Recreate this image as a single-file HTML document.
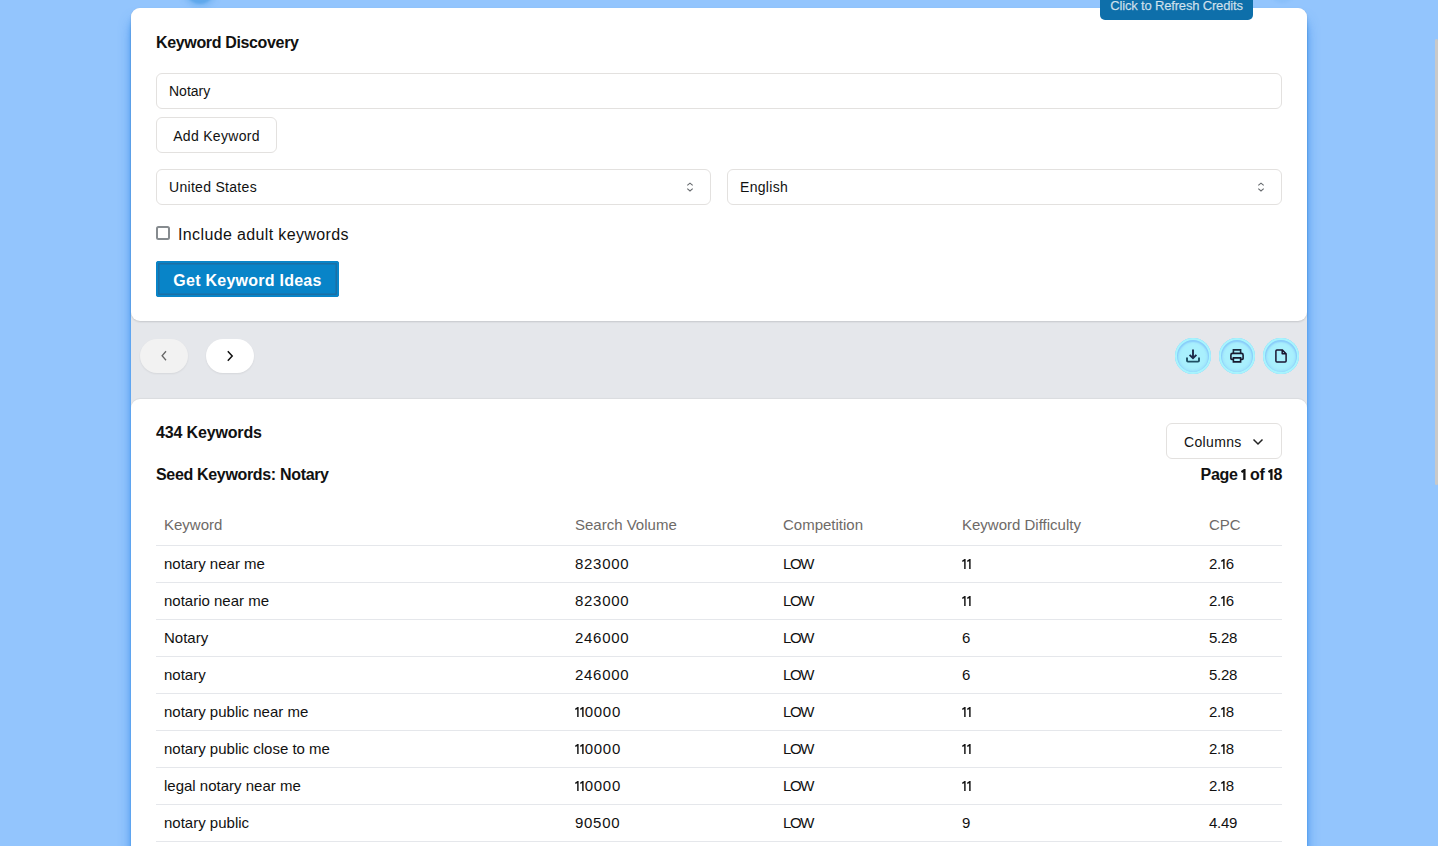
<!DOCTYPE html>
<html><head><meta charset="utf-8">
<style>
*{box-sizing:border-box;margin:0;padding:0}
html,body{width:1438px;height:846px;overflow:hidden}
body{background:#93c5fd;font-family:"Liberation Sans",sans-serif;color:#111;position:relative}
.abs{position:absolute}
.scroll{position:absolute;left:1435px;top:39px;width:3px;height:446px;background:#c9c9c9;border-radius:2px}
.blob{position:absolute;left:184px;top:-31px;width:32px;height:35px;border-radius:50%;background:#60a8ec;box-shadow:0 1px 4px 3px rgba(110,175,240,.5);filter:blur(1.2px)}
.blob2{position:absolute;left:1268px;top:-24px;width:28px;height:27px;border-radius:50%;background:rgba(100,170,240,.18);filter:blur(1px)}
.wrap{position:absolute;left:131px;top:8px;width:1176px;height:900px;background:#e5e7eb;border-radius:9px 9px 0 0;box-shadow:0 12px 14px -2px rgba(30,120,225,.75), 0 8px 5px -1px rgba(40,140,230,.55), 0 14px 3px -1px rgba(50,150,235,.6)}
.card1{position:absolute;left:131px;top:8px;width:1176px;height:313px;background:#fff;border-radius:9px;box-shadow:0 1px 2px rgba(0,0,0,.14)}
.card2{position:absolute;left:131px;top:399px;width:1176px;height:500px;background:#fff;border-radius:9px 9px 0 0;box-shadow:0 -1px 1px rgba(0,0,0,.05)}
.credits{position:absolute;left:1100px;top:-10px;width:153px;height:29.5px;background:#0e6faa;color:rgba(255,255,255,.75);font-size:13px;letter-spacing:-0.17px;-webkit-text-stroke:0.25px rgba(255,255,255,.6);border-radius:0 0 5px 5px;text-align:center;line-height:32px}
.h{position:absolute;font-weight:bold;font-size:16px;color:#111}
.input{position:absolute;border:1px solid #e3e1df;border-radius:6px;background:#fff;font-size:14px;color:#111}
.btn-outline{position:absolute;border:1px solid #e3e1df;border-radius:6px;background:#fff;font-size:14px;color:#111;text-align:center}
.primary{position:absolute;left:156px;top:261px;width:183px;height:36px;background:#0884c8;border-radius:3px;box-shadow:inset 0 0 0 2px #0884c8, inset 0 0 0 3.5px rgba(45,95,135,.55);color:#fff;font-weight:bold;font-size:16px;text-align:center;line-height:39px;letter-spacing:0.25px}
.cb{position:absolute;left:156px;top:226px;width:14px;height:14px;border:2px solid #868b8f;border-radius:2.5px;background:#fff}
.band-btn{position:absolute;top:339px;width:48px;height:34px;border-radius:17px;box-shadow:0 1px 2px rgba(0,0,0,.07)}
.circ{position:absolute;top:338px;width:36px;height:36px;border-radius:50%;background:#a9f0fd;box-shadow:inset 0 0 0 2px #a8f4fd, inset 0 1px 1.5px 3px rgba(115,180,248,.55), inset 0 0 3px 4px rgba(150,215,252,.4)}
.circ svg{position:absolute;left:0;top:0}
table{position:absolute;left:156px;top:506px;width:1126px;border-collapse:collapse;font-size:15px}
th{font-weight:normal;color:#6e6a67;text-align:left;height:39px;padding:0 0 2px 8px;border-bottom:1px solid #e5e7eb}
.n{letter-spacing:0.7px}
.c{letter-spacing:-1.4px}
.one{display:inline-block;vertical-align:baseline;margin-right:0.2px}
.d{letter-spacing:-0.3px}
td{height:37px;padding:0 0 0 8px;border-bottom:1px solid #e5e7eb;color:#111}
</style></head><body>
<div class="blob"></div><div class="blob2"></div>
<div class="wrap"></div>
<div class="card1"></div>
<div class="card2"></div>
<div class="credits">Click to Refresh Credits</div>
<div class="scroll"></div>

<div class="h" id="t1" style="left:156px;top:34px;letter-spacing:-0.35px">Keyword Discovery</div>
<div class="input" id="inp" style="left:156px;top:73px;width:1126px;height:36px;padding-left:12px;line-height:34px">Notary</div>
<div class="btn-outline" id="add" style="left:156px;top:117px;width:121px;height:36px;line-height:37px;letter-spacing:0.3px">Add Keyword</div>
<div class="input" id="sel1" style="left:156px;top:169px;width:555px;height:36px;padding-left:12px;line-height:35px;letter-spacing:0.3px">United States
  <svg class="abs" style="right:15px;top:11px" width="10" height="14" viewBox="0 0 10 14"><path d="M2.3 4.4 L5 2.1 L7.7 4.4 M2.3 7.6 L5 10 L7.7 7.6" fill="none" stroke="#666a6e" stroke-width="1.1"/></svg></div>
<div class="input" id="sel2" style="left:727px;top:169px;width:555px;height:36px;padding-left:12px;line-height:35px;letter-spacing:0.3px">English
  <svg class="abs" style="right:15px;top:11px" width="10" height="14" viewBox="0 0 10 14"><path d="M2.3 4.4 L5 2.1 L7.7 4.4 M2.3 7.6 L5 10 L7.7 7.6" fill="none" stroke="#666a6e" stroke-width="1.1"/></svg></div>
<div class="cb"></div>
<div class="abs" id="lbl" style="left:178px;top:226px;font-size:16px;color:#111;letter-spacing:0.37px">Include adult keywords</div>
<div class="primary" id="go">Get Keyword Ideas</div>

<div class="band-btn" style="left:140px;background:#f2f2f2"><svg class="abs" style="left:18px;top:11px" width="12" height="12" viewBox="0 0 12 12"><path d="M8 1.3 L4.1 5.8 L8 10.3" fill="none" stroke="#666" stroke-width="1.3"/></svg></div>
<div class="band-btn" style="left:206px;background:#fff"><svg class="abs" style="left:18px;top:11px" width="12" height="12" viewBox="0 0 12 12"><path d="M3.8 1.3 L8.2 6 L3.8 10.7" fill="none" stroke="#111" stroke-width="1.5"/></svg></div>

<div class="circ" style="left:1175px"><svg width="36" height="36" viewBox="0 0 36 36"><path d="M18 11.5 V20 M14.6 16.8 L18 20.2 L21.4 16.8" fill="none" stroke="#1e2a4a" stroke-width="1.9"/><path d="M12 19.6 V22.6 Q12 23.6 13 23.6 H23 Q24 23.6 24 22.6 V19.6" fill="none" stroke="#1f4f63" stroke-width="1.9"/></svg></div>
<div class="circ" style="left:1219px"><svg width="36" height="36" viewBox="0 0 36 36"><path d="M14.4 15.4 V11.9 H21.6 V15.4" fill="none" stroke="#1a2a3e" stroke-width="1.6"/><path d="M14.4 21.4 H12.8 Q11.9 21.4 11.9 20.5 V17 Q11.9 15.4 13.5 15.4 H22.5 Q24.1 15.4 24.1 17 V20.5 Q24.1 21.4 23.2 21.4 H21.6 M14.4 19.9 H21.6 V23.9 H14.4 Z" fill="none" stroke="#161a2e" stroke-width="1.6"/></svg></div>
<div class="circ" style="left:1263px"><svg width="36" height="36" viewBox="0 0 36 36"><path d="M13.9 11.9 H19.2 L23.1 15.8 V22.9 Q23.1 23.9 22.1 23.9 H13.9 Q12.9 23.9 12.9 22.9 V12.9 Q12.9 11.9 13.9 11.9 Z M19.2 12 V15.8 H23" fill="none" stroke="#1a1530" stroke-width="1.5" stroke-linejoin="round"/></svg></div>

<div class="h" id="t2" style="left:156px;top:424px;letter-spacing:-0.15px">434 Keywords</div>
<div class="btn-outline" id="cols" style="left:1166px;top:423px;width:116px;height:36px;line-height:36px;text-align:left;padding-left:17px;letter-spacing:0.35px">Columns
  <svg class="abs" style="left:85px;top:14px" width="12" height="8" viewBox="0 0 12 8"><path d="M1.5 1.5 L6 6 L10.5 1.5" fill="none" stroke="#222" stroke-width="1.5"/></svg></div>
<div class="h" id="t3" style="left:156px;top:466px;letter-spacing:-0.33px">Seed Keywords: Notary</div>
<div class="h" id="t4" style="right:156px;top:466px;letter-spacing:-0.3px;word-spacing:-0.5px">Page <svg class="one" width="5" height="11" viewBox="0 0 5 11"><path d="M0.5 3.1 L3.4 1.1 V11" fill="none" stroke="#111" stroke-width="2.3"/></svg> of <svg class="one" width="5" height="11" viewBox="0 0 5 11"><path d="M0.5 3.1 L3.4 1.1 V11" fill="none" stroke="#111" stroke-width="2.3"/></svg>8</div>

<table>
<tr><th style="width:411px">Keyword</th><th style="width:208px">Search Volume</th><th style="width:179px">Competition</th><th style="width:247px">Keyword Difficulty</th><th>CPC</th></tr>
<tr><td>notary near me</td><td class="n">823000</td><td class="c">LOW</td><td class="d"><svg class="one" width="4.7" height="10.2" viewBox="0 0 4.7 10.2"><path d="M0.3 2.5 L2.9 0.6 V10.2" fill="none" stroke="#111" stroke-width="1.45"/></svg><svg class="one" width="4.7" height="10.2" viewBox="0 0 4.7 10.2"><path d="M0.3 2.5 L2.9 0.6 V10.2" fill="none" stroke="#111" stroke-width="1.45"/></svg></td><td class="d">2.<svg class="one" width="4.7" height="10.2" viewBox="0 0 4.7 10.2"><path d="M0.3 2.5 L2.9 0.6 V10.2" fill="none" stroke="#111" stroke-width="1.45"/></svg>6</td></tr>
<tr><td>notario near me</td><td class="n">823000</td><td class="c">LOW</td><td class="d"><svg class="one" width="4.7" height="10.2" viewBox="0 0 4.7 10.2"><path d="M0.3 2.5 L2.9 0.6 V10.2" fill="none" stroke="#111" stroke-width="1.45"/></svg><svg class="one" width="4.7" height="10.2" viewBox="0 0 4.7 10.2"><path d="M0.3 2.5 L2.9 0.6 V10.2" fill="none" stroke="#111" stroke-width="1.45"/></svg></td><td class="d">2.<svg class="one" width="4.7" height="10.2" viewBox="0 0 4.7 10.2"><path d="M0.3 2.5 L2.9 0.6 V10.2" fill="none" stroke="#111" stroke-width="1.45"/></svg>6</td></tr>
<tr><td>Notary</td><td class="n">246000</td><td class="c">LOW</td><td class="d">6</td><td class="d">5.28</td></tr>
<tr><td>notary</td><td class="n">246000</td><td class="c">LOW</td><td class="d">6</td><td class="d">5.28</td></tr>
<tr><td>notary public near me</td><td class="n"><svg class="one" width="4.7" height="10.2" viewBox="0 0 4.7 10.2"><path d="M0.3 2.5 L2.9 0.6 V10.2" fill="none" stroke="#111" stroke-width="1.45"/></svg><svg class="one" width="4.7" height="10.2" viewBox="0 0 4.7 10.2"><path d="M0.3 2.5 L2.9 0.6 V10.2" fill="none" stroke="#111" stroke-width="1.45"/></svg>0000</td><td class="c">LOW</td><td class="d"><svg class="one" width="4.7" height="10.2" viewBox="0 0 4.7 10.2"><path d="M0.3 2.5 L2.9 0.6 V10.2" fill="none" stroke="#111" stroke-width="1.45"/></svg><svg class="one" width="4.7" height="10.2" viewBox="0 0 4.7 10.2"><path d="M0.3 2.5 L2.9 0.6 V10.2" fill="none" stroke="#111" stroke-width="1.45"/></svg></td><td class="d">2.<svg class="one" width="4.7" height="10.2" viewBox="0 0 4.7 10.2"><path d="M0.3 2.5 L2.9 0.6 V10.2" fill="none" stroke="#111" stroke-width="1.45"/></svg>8</td></tr>
<tr><td>notary public close to me</td><td class="n"><svg class="one" width="4.7" height="10.2" viewBox="0 0 4.7 10.2"><path d="M0.3 2.5 L2.9 0.6 V10.2" fill="none" stroke="#111" stroke-width="1.45"/></svg><svg class="one" width="4.7" height="10.2" viewBox="0 0 4.7 10.2"><path d="M0.3 2.5 L2.9 0.6 V10.2" fill="none" stroke="#111" stroke-width="1.45"/></svg>0000</td><td class="c">LOW</td><td class="d"><svg class="one" width="4.7" height="10.2" viewBox="0 0 4.7 10.2"><path d="M0.3 2.5 L2.9 0.6 V10.2" fill="none" stroke="#111" stroke-width="1.45"/></svg><svg class="one" width="4.7" height="10.2" viewBox="0 0 4.7 10.2"><path d="M0.3 2.5 L2.9 0.6 V10.2" fill="none" stroke="#111" stroke-width="1.45"/></svg></td><td class="d">2.<svg class="one" width="4.7" height="10.2" viewBox="0 0 4.7 10.2"><path d="M0.3 2.5 L2.9 0.6 V10.2" fill="none" stroke="#111" stroke-width="1.45"/></svg>8</td></tr>
<tr><td>legal notary near me</td><td class="n"><svg class="one" width="4.7" height="10.2" viewBox="0 0 4.7 10.2"><path d="M0.3 2.5 L2.9 0.6 V10.2" fill="none" stroke="#111" stroke-width="1.45"/></svg><svg class="one" width="4.7" height="10.2" viewBox="0 0 4.7 10.2"><path d="M0.3 2.5 L2.9 0.6 V10.2" fill="none" stroke="#111" stroke-width="1.45"/></svg>0000</td><td class="c">LOW</td><td class="d"><svg class="one" width="4.7" height="10.2" viewBox="0 0 4.7 10.2"><path d="M0.3 2.5 L2.9 0.6 V10.2" fill="none" stroke="#111" stroke-width="1.45"/></svg><svg class="one" width="4.7" height="10.2" viewBox="0 0 4.7 10.2"><path d="M0.3 2.5 L2.9 0.6 V10.2" fill="none" stroke="#111" stroke-width="1.45"/></svg></td><td class="d">2.<svg class="one" width="4.7" height="10.2" viewBox="0 0 4.7 10.2"><path d="M0.3 2.5 L2.9 0.6 V10.2" fill="none" stroke="#111" stroke-width="1.45"/></svg>8</td></tr>
<tr><td>notary public</td><td class="n">90500</td><td class="c">LOW</td><td class="d">9</td><td class="d">4.49</td></tr>
<tr><td>notary services</td><td class="n">49500</td><td class="c">LOW</td><td class="d"><svg class="one" width="4.7" height="10.2" viewBox="0 0 4.7 10.2"><path d="M0.3 2.5 L2.9 0.6 V10.2" fill="none" stroke="#111" stroke-width="1.45"/></svg>0</td><td class="d">3.<svg class="one" width="4.7" height="10.2" viewBox="0 0 4.7 10.2"><path d="M0.3 2.5 L2.9 0.6 V10.2" fill="none" stroke="#111" stroke-width="1.45"/></svg>0</td></tr>
</table>
</body></html>
